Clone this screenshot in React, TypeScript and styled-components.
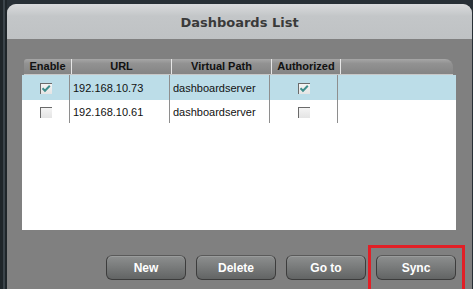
import React from "react";
import styled, { createGlobalStyle } from "styled-components";

const Global = createGlobalStyle`
  html, body { margin: 0; padding: 0; background: #283036; }
  body { font-family: "Liberation Sans", Arial, sans-serif; overflow: hidden; }
`;

const Screen = styled.div`
  width: 473px;
  height: 289px;
  box-sizing: border-box;
  padding: 4px 1px 0 7px;
  background: linear-gradient(to right, #1f262a 0 3px, #3b444a 3px 5px, #1f262a 5px 7px, #283036 7px);
  display: flex;
`;

const Panel = styled.div`
  flex: 1;
  display: flex;
  flex-direction: column;
  border-radius: 9px 9px 0 0;
  overflow: hidden;
  background: #808080;
`;

const TitleBar = styled.div`
  height: 35px;
  flex: none;
  display: flex;
  align-items: center;
  justify-content: center;
  background: linear-gradient(to bottom, #d9dbdc 0%, #c3c6c8 35%, #bfc2c4 100%);
  font-family: "DejaVu Sans", Verdana, sans-serif;
  font-weight: bold;
  font-size: 13px;
  color: #3a3a3a;
  padding-top: 1px;
  box-sizing: border-box;
`;

const Body = styled.div`
  flex: 1;
  display: flex;
  flex-direction: column;
  padding: 20px 16px 0 15px;
`;

const Table = styled.div`
  height: 171px;
  display: flex;
  flex-direction: column;
`;

const HeaderRow = styled.div`
  height: 15px;
  display: grid;
  grid-template-columns: 48px 100px 100px 69px 1fr;
  margin-right: 3px;
  margin-left: 2px;
  border-radius: 3px 8px 0 0;
  background: linear-gradient(to bottom, #a6a6a6 0%, #929292 30%, #848484 100%);
  border-bottom: 1px solid #c8c8c8;
`;

const HeadCell = styled.div<{ $last?: boolean }>`
  font-weight: bold;
  font-size: 11px;
  color: #111;
  text-align: center;
  line-height: 15px;
  border-right: ${(p) => (p.$last ? "none" : "1px solid #e6e6e6")};
  white-space: nowrap;
`;

const Rows = styled.div`
  flex: 1;
  background: #fff;
  display: flex;
  flex-direction: column;
`;

const Row = styled.div<{ $selected?: boolean; $h: number }>`
  height: ${(p) => p.$h}px;
  display: grid;
  grid-template-columns: 48px 100px 100px 68px 1fr;
  background: ${(p) => (p.$selected ? "#bcdde8" : "#ffffff")};
`;

const Cell = styled.div<{ $center?: boolean; $sep?: boolean }>`
  font-size: 11px;
  color: #111;
  display: flex;
  align-items: center;
  justify-content: ${(p) => (p.$center ? "center" : "flex-start")};
  padding-left: ${(p) => (p.$center ? "0" : "3px")};
  border-right: ${(p) => (p.$sep ? "1px solid #8e8e8e" : "none")};
  white-space: nowrap;
`;

const Check = styled.span<{ $checked?: boolean }>`
  width: 12px;
  height: 11px;
  box-sizing: border-box;
  border-top: 1px solid #6a6a6a;
  border-left: 1px solid #6a6a6a;
  background: linear-gradient(to bottom, #f4f4f4, #e4e4e4);
  display: inline-flex;
  align-items: center;
  justify-content: center;
  margin-top: 1px;
`;

const ButtonBar = styled.div`
  display: flex;
  justify-content: flex-end;
  gap: 10px;
  margin-top: 25px;
  padding-right: 0;
`;

const ButtonSlot = styled.div`
  position: relative;
`;

const Button = styled.button`
  width: 80px;
  height: 25px;
  box-sizing: border-box;
  border: 1px solid #3c3c3c;
  border-top-color: #5a5a5a;
  border-radius: 6px;
  background: linear-gradient(to bottom, #8d8f8f 0%, #7a7c7c 45%, #626464 100%);
  box-shadow: inset 0 1px 0 #9a9c9c;
  color: #fff;
  font-family: "Liberation Sans", Arial, sans-serif;
  font-weight: bold;
  font-size: 12px;
  padding: 0;
  margin: 0;
`;

const Highlight = styled.div`
  position: absolute;
  left: -8px;
  top: -10px;
  width: 97px;
  height: 48px;
  box-sizing: border-box;
  border: 3px solid #e21f26;
  pointer-events: none;
`;

const CheckMark = () => (
  <svg width="10" height="9" viewBox="0 0 10 9">
    <path d="M1.5 4.2 L4 6.8 L8.8 1.8" fill="none" stroke="#3f8e8c" strokeWidth="2" />
  </svg>
);

const data = [
  { ip: "192.168.10.73", path: "dashboardserver", on: true, auth: true, h: 25 },
  { ip: "192.168.10.61", path: "dashboardserver", on: false, auth: false, h: 23 },
];

export default function App() {
  return (
    <>
      <Global />
      <Screen>
        <Panel>
          <TitleBar>Dashboards List</TitleBar>
          <Body>
            <Table>
              <HeaderRow>
                <HeadCell>Enable</HeadCell>
                <HeadCell>URL</HeadCell>
                <HeadCell>Virtual Path</HeadCell>
                <HeadCell>Authorized</HeadCell>
                <HeadCell $last />
              </HeaderRow>
              <Rows>
                {data.map((r, i) => (
                  <Row key={i} $selected={i === 0} $h={r.h}>
                    <Cell $center $sep>
                      <Check>{r.on && <CheckMark />}</Check>
                    </Cell>
                    <Cell $sep>{r.ip}</Cell>
                    <Cell $sep>{r.path}</Cell>
                    <Cell $center $sep>
                      <Check>{r.auth && <CheckMark />}</Check>
                    </Cell>
                    <Cell />
                  </Row>
                ))}
              </Rows>
            </Table>
            <ButtonBar>
              <ButtonSlot><Button>New</Button></ButtonSlot>
              <ButtonSlot><Button>Delete</Button></ButtonSlot>
              <ButtonSlot><Button>Go to</Button></ButtonSlot>
              <ButtonSlot>
                <Button>Sync</Button>
                <Highlight />
              </ButtonSlot>
            </ButtonBar>
          </Body>
        </Panel>
      </Screen>
    </>
  );
}
